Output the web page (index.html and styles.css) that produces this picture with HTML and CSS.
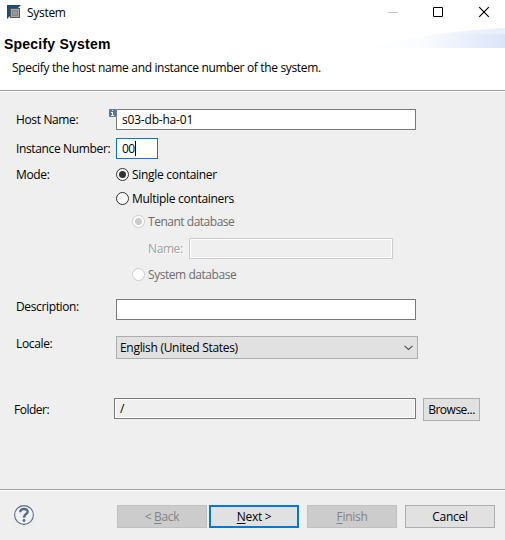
FILE: index.html
```html
<!DOCTYPE html>
<html lang="en">
<head>
<meta charset="utf-8">
<title>System</title>
<link rel="stylesheet" href="styles.css">
</head>
<body>
<div class="dialog">
  <header class="header">
    <div class="titlebar">
      <svg class="app-icon" width="14" height="14" viewBox="0 0 14 14"><path d="M0 0H14L0 14Z" fill="#164d82"/><path d="M3 3H13V13H3Z" fill="#555"/><path d="M4 4H12V12H4Z" fill="#a8a8a8"/><path d="M5 5H11V11H5Z" fill="#868686"/><path d="M6 6H10V10H6Z" fill="#989898"/></svg>
      <span class="title">System</span>
      <svg class="controls" width="102" height="12" viewBox="0 0 102 12"><path d="M0 6.500H10" stroke="#c8c8c8"/><path d="M45.500 1.500H54.500V10.500H45.500Z" fill="none" stroke="#000"/><path d="M91.200 1.200L100.800 10.800M100.800 1.200L91.200 10.800" stroke="#000" stroke-width="1.150"/></svg>
    </div>
    <svg class="swoosh" width="140" height="20" viewBox="0 0 140 20"><defs><linearGradient id="sky"><stop offset="0" stop-color="#fff"/><stop offset=".4" stop-color="#fafcff"/><stop offset="1" stop-color="#dbe4f8"/></linearGradient><linearGradient id="sheen"><stop offset="0" stop-color="#fff" stop-opacity="0"/><stop offset="1" stop-color="#e9effb"/></linearGradient></defs><path d="M0 20Q60 4 140 0V20Z" fill="url(#sky)"/><path d="M70 7Q112 1 140 0V6Q108 5 70 7Z" fill="url(#sheen)"/></svg>
    <h1 class="heading">Specify System</h1>
    <p class="subtitle">Specify the host name and instance number of the system.</p>
  </header>

  <main class="form">
    <div class="row host">
      <span class="label">Host Name:</span>
      <div class="field wide"><svg class="info" width="7" height="8" viewBox="0 0 7 8"><rect width="7" height="8" rx="1" fill="#4a7bab"/><path d="M3 1H4V2H3ZM2 3H4V6H5V7H2V6H3V4H2Z" fill="#fff"/></svg><span class="host-value">s03-db-ha-01</span></div>
    </div>
    <div class="row instance">
      <span class="label">Instance Number:</span>
      <div class="field number"><span>00</span><i class="caret"></i></div>
    </div>
    <div class="row mode">
      <span class="label">Mode:</span>
      <span class="radio checked"></span><span>Single container</span>
    </div>
    <div class="row multiple"><span class="radio"></span><span>Multiple containers</span></div>
    <div class="row tenant"><span class="radio disabled checked"></span><span>Tenant database</span></div>
    <div class="row name"><span class="name-label">Name:</span><div class="field dim"></div></div>
    <div class="row sysdb"><span class="radio disabled"></span><span>System database</span></div>
    <div class="row description">
      <span class="label">Description:</span>
      <div class="field wide"></div>
    </div>
    <div class="row locale">
      <span class="label">Locale:</span>
      <div class="select"><span>English (United States)</span><svg width="9" height="6" viewBox="0 0 9 6"><path d="M.5 .8L4.500 4.500L8.500 .8" fill="none" stroke="#505050" stroke-width="1.100"/></svg></div>
    </div>
    <div class="row folder">
      <span class="label">Folder:</span>
      <div class="field readonly">/</div>
      <div class="button browse"><span>Browse...</span></div>
    </div>
  </main>

  <footer class="footer">
    <svg class="help" width="20" height="20" viewBox="0 0 20 20"><circle cx="10" cy="10" r="9.400" fill="#f1f3f6" stroke="#566c8c" stroke-width="1.100"/><path d="M6.300 7.200Q6.200 4 10 4Q13.700 4 13.600 6.900Q13.500 8.300 11.500 9.600Q10.100 10.600 10.100 12.800" fill="none" stroke="#566c8c" stroke-width="2.400"/><circle cx="10" cy="15.500" r="1.400" fill="#566c8c"/></svg>
    <div class="button off back"><span>&lt; <u>B</u>ack</span></div>
    <div class="button primary"><span><u>N</u>ext &gt;</span></div>
    <div class="button off finish"><span><u>F</u>inish</span></div>
    <div class="button cancel"><span>Cancel</span></div>
  </footer>
</div>
</body>
</html>
```
FILE: styles.css
```css
* { box-sizing: border-box; }
body { margin: 0; background: #efefef; font: 12px/16px "Open Sans", "Noto Sans", sans-serif; color: #000; letter-spacing: -0.3px; white-space: nowrap; }
.dialog { width: 505px; height: 540px; display: flex; flex-direction: column; overflow: hidden; }

.header { position: relative; height: 92px; background: #fff; border-bottom: 1px solid #fff; box-shadow: inset 0 -1px #a0a0a0; }
.titlebar { display: flex; align-items: center; height: 26px; padding: 0 15px 0 7px; }
.app-icon { margin-bottom: 2px; }
.title { margin: 0 auto 0 6px; letter-spacing: -0.3px; }
.controls { margin-bottom: 2px; }
.swoosh { position: absolute; right: 0; top: 28px; }
.heading { position: relative; margin: 10px 0 0 4px; font: bold 14px/17px "Liberation Sans", sans-serif; letter-spacing: 0.22px; }
.subtitle { margin: 7px 0 0 12px; letter-spacing: -0.34px; }

.form { flex: none; height: 397px; padding-top: 17px; }
.row { display: flex; align-items: center; padding-left: 16px; }
.label { flex: none; width: 100px; letter-spacing: -0.36px; }
.host { height: 21px; }
.host-value { letter-spacing: -0.2px; }
.instance { height: 21px; margin-top: 8px; }
.mode { height: 14px; margin-top: 9px; }
.multiple { height: 14px; margin-top: 10px; padding-left: 116px; }
.tenant { height: 14px; margin-top: 9px; padding-left: 132px; color: #6d6d6d; letter-spacing: -0.48px; }
.name { height: 21px; margin-top: 9px; padding-left: 148px; }
.sysdb { height: 14px; margin-top: 9px; padding-left: 132px; color: #6d6d6d; letter-spacing: -0.45px; }
.description { height: 21px; margin-top: 17px; }
.description .label { margin-bottom: 6px; }
.locale { height: 23px; margin-top: 16px; }
.locale .label { margin-bottom: 7px; }
.folder { height: 23px; margin-top: 39px; padding-left: 14px; }
.folder .label { letter-spacing: -0.5px; }

.field { position: relative; display: flex; align-items: center; height: 21px; padding-left: 5px; border: 1px solid #7a7a7a; background: #fff; }
.wide { width: 300px; }
.number { width: 42px; border-color: #0078d7; }
.number span { letter-spacing: -0.6px; }
.caret { width: 1px; height: 15px; background: #000; }
.info { position: absolute; left: -8px; top: -1px; }
.name-label { width: 41px; color: #a0a0a0; text-shadow: 1px 1px #fff; letter-spacing: -0.4px; }
.dim { width: 204px; border-color: #ccc; background: #efefef; box-shadow: inset 0 0 0 1px #fff; }
.readonly { align-self: flex-start; width: 302px; background: #efefef; box-shadow: inset 0 0 0 1px #fff; }
.select { display: flex; align-items: center; justify-content: space-between; width: 302px; height: 23px; padding: 0 4px 0 3px; border: 1px solid #adadad; background: #e1e1e1; }

.radio { display: flex; align-items: center; justify-content: center; align-self: flex-start; flex: none; width: 13px; height: 13px; margin-right: 3px; border: 1px solid #333; border-radius: 50%; background: #fff; }
.radio.checked::after { content: ""; width: 7px; height: 7px; border-radius: 50%; background: #333; }
.radio.disabled { border-color: #ccc; }
.radio.disabled.checked::after { background: #ccc; }

.button { display: flex; align-items: center; justify-content: center; flex: none; width: 90px; height: 23px; border: 1px solid #adadad; background: #e1e1e1; }
.browse { width: 57px; margin-left: 7px; letter-spacing: -0.5px; }
.footer { display: flex; align-items: flex-start; height: 51px; padding: 15px 10px 0 14px; border-top: 1px solid #a0a0a0; box-shadow: inset 0 1px #fff; }
.back { margin-left: 83px; }
.primary { margin-left: 2px; border: 2px solid #0078d7; }
.finish, .cancel { margin-left: 8px; }
.off { color: #838383; background: #ccc; border-color: #bfbfbf; }
u { text-underline-offset: 2px; }
```
